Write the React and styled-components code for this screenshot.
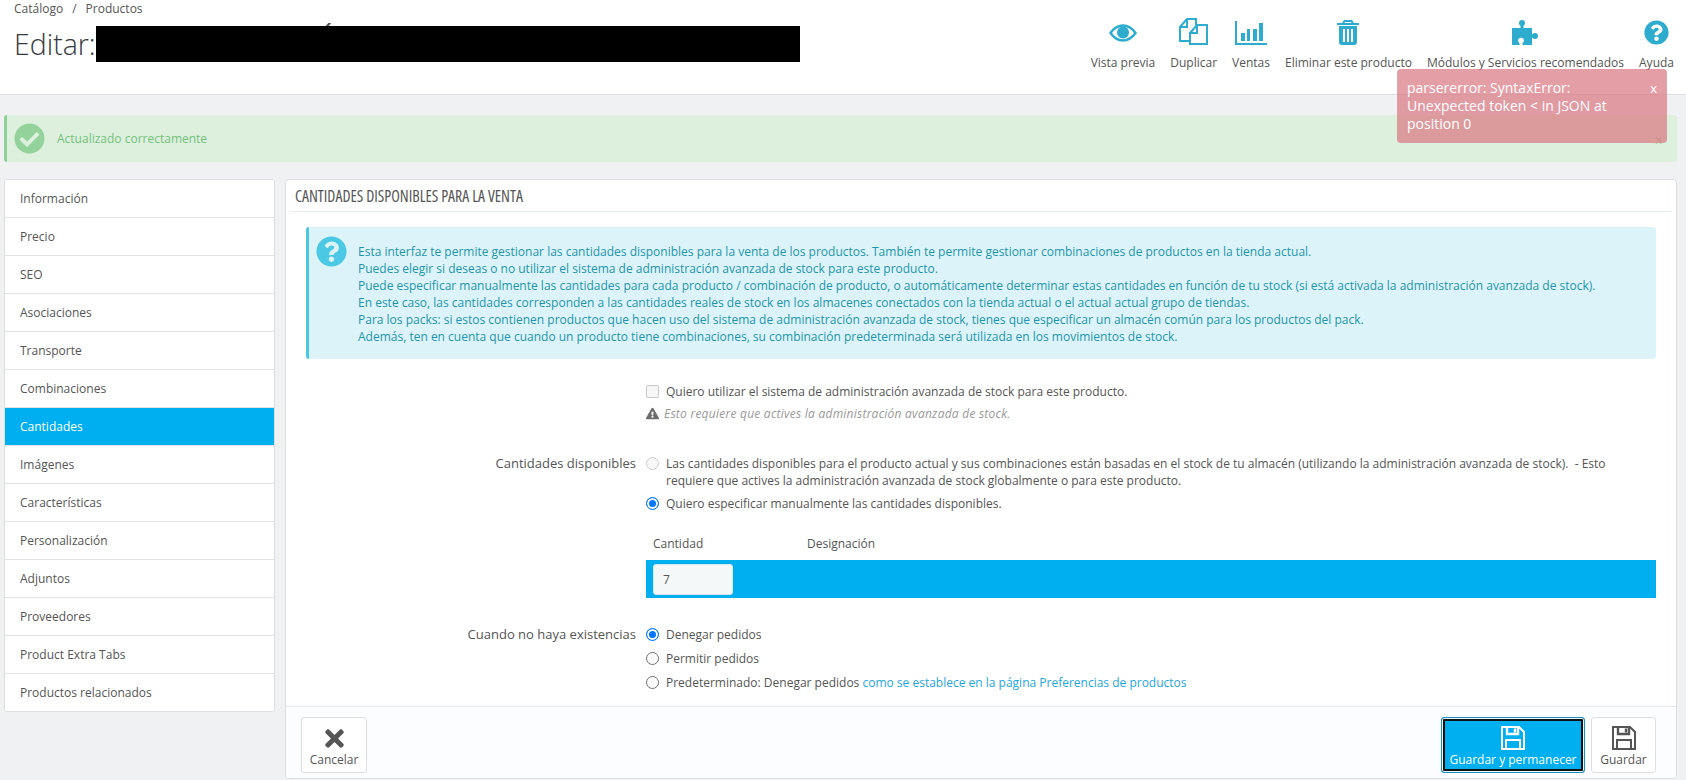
import React from 'react'
import styled, { createGlobalStyle } from 'styled-components'
import { FaQuestionCircle, FaCheckCircle, FaExclamationTriangle, FaTimes } from 'react-icons/fa'

const GlobalStyle = createGlobalStyle`
  html, body { margin: 0; padding: 0; background: #eff1f2; }
  body { font-family: "Open Sans", "Liberation Sans", sans-serif; font-size: 12px; color: #555; overflow: hidden; }
  * { box-sizing: border-box; }
`

const EyeIcon = () => (
  <svg width="28" height="21" viewBox="0 0 28 21">
    <path d="M1.5 9C5 4 9 1.5 14 1.5S23 4 26.5 9C23 14 19 16.5 14 16.5S5 14 1.5 9Z" fill="none" stroke="#2eacce" strokeWidth="2.4" />
    <circle cx="14" cy="8.5" r="6" fill="#2eacce" />
  </svg>
)

const FilesIcon = () => (
  <svg width="29" height="27" viewBox="0 0 29 27" fill="none" stroke="#2eacce" strokeWidth="2">
    <path d="M11 23H1V9L8 1h9v6" />
    <path d="M8 1v8H1" />
    <path d="M11 15l7-8h10v19H11z" />
    <path d="M18 7v8h-7" />
  </svg>
)

const ChartIcon = () => (
  <svg width="32" height="24" viewBox="0 0 32 24" fill="#2eacce">
    <rect x="0" y="0" width="2" height="24" />
    <rect x="0" y="22" width="32" height="2" />
    <rect x="6" y="12" width="4" height="8" />
    <rect x="12" y="8" width="3" height="12" />
    <rect x="18" y="8" width="4" height="12" />
    <rect x="24" y="2" width="4" height="18" />
  </svg>
)

const TrashIcon = () => (
  <svg width="22" height="25" viewBox="0 0 22 25" fill="#2eacce">
    <path fillRule="evenodd" d="M7 0h8l2 3h5v2H0V3h5zM8 2 7.4 3h7.2L14 2z" />
    <path fillRule="evenodd" d="M2 6h18v16a3 3 0 0 1-3 3H5a3 3 0 0 1-3-3zM6 9v13h2V9zM10 9v13h2V9zM14 9v13h2V9z" />
  </svg>
)

const PuzzleIcon = () => (
  <svg width="26" height="25" viewBox="0 0 26 25" fill="#2eacce">
    <circle cx="10" cy="3" r="3" />
    <rect x="8.5" y="4" width="3" height="5" />
    <rect x="0" y="8" width="20" height="17" />
    <rect x="19" y="14.5" width="4" height="3" />
    <circle cx="23" cy="16" r="3" />
    <circle cx="9" cy="20.5" r="2.8" fill="#fff" />
    <rect x="7.5" y="21" width="3" height="4" fill="#fff" />
  </svg>
)

const SaveIcon = () => (
  <svg width="24" height="24" viewBox="0 0 24 24" fill="none" stroke="currentColor" strokeWidth="2">
    <path d="M1 1h17l5 5v17H1z" />
    <path d="M6 1v7h11V1" strokeWidth="2.4" />
    <path d="M14 2.5v4" strokeWidth="2.4" />
    <path d="M5 23v-9h14v9" />
  </svg>
)

const tools = [
  { label: 'Vista previa', icon: <EyeIcon /> },
  { label: 'Duplicar', icon: <FilesIcon /> },
  { label: 'Ventas', icon: <ChartIcon /> },
  { label: 'Eliminar este producto', icon: <TrashIcon /> },
  { label: 'Módulos y Servicios recomendados', icon: <PuzzleIcon /> },
  { label: 'Ayuda', icon: <FaQuestionCircle size={25} /> },
]

const tabs = ['Información', 'Precio', 'SEO', 'Asociaciones', 'Transporte', 'Combinaciones', 'Cantidades', 'Imágenes', 'Características', 'Personalización', 'Adjuntos', 'Proveedores', 'Product Extra Tabs', 'Productos relacionados']

const infoLines = [
  'Esta interfaz te permite gestionar las cantidades disponibles para la venta de los productos. También te permite gestionar combinaciones de productos en la tienda actual.',
  'Puedes elegir si deseas o no utilizar el sistema de administración avanzada de stock para este producto.',
  'Puede especificar manualmente las cantidades para cada producto / combinación de producto, o automáticamente determinar estas cantidades en función de tu stock (si está activada la administración avanzada de stock).',
  'En este caso, las cantidades corresponden a las cantidades reales de stock en los almacenes conectados con la tienda actual o el actual actual grupo de tiendas.',
  'Para los packs: si estos contienen productos que hacen uso del sistema de administración avanzada de stock, tienes que especificar un almacén común para los productos del pack.',
  'Además, ten en cuenta que cuando un producto tiene combinaciones, su combinación predeterminada será utilizada en los movimientos de stock.',
]

export default function App() {
  return (
    <Page>
      <GlobalStyle />
      <Header>
        <HeaderLeft>
          <Breadcrumb>Catálogo<BreadcrumbSep>/</BreadcrumbSep>Productos</Breadcrumb>
          <TitleRow>
            <Title>Editar:</Title>
            <Redacted />
          </TitleRow>
        </HeaderLeft>
        <Toolbar>
          {tools.map((tool) => (
            <Tool key={tool.label}>
              <ToolIcon>{tool.icon}</ToolIcon>
              <span>{tool.label}</span>
            </Tool>
          ))}
        </Toolbar>
        <Toast>
          <ToastClose>x</ToastClose>
          parsererror: SyntaxError: Unexpected token &lt; in JSON at position 0
        </Toast>
      </Header>

      <Content>
        <SuccessAlert>
          <FaCheckCircle size={31} color="#93d29b" />
          <span>Actualizado correctamente</span>
          <AlertClose>x</AlertClose>
        </SuccessAlert>

        <Columns>
          <TabList>
            {tabs.map((tab) => (
              <TabItem key={tab} $active={tab === 'Cantidades'}>{tab}</TabItem>
            ))}
          </TabList>

          <Panel>
            <PanelHeading>Cantidades disponibles para la venta</PanelHeading>
            <PanelBody>
              <InfoBox>
                <InfoIcon><FaQuestionCircle size={31} color="#4bc8e4" /></InfoIcon>
                <div>
                  {infoLines.map((line) => <div key={line}>{line}</div>)}
                </div>
              </InfoBox>

              <FormRow $top={24}>
                <FieldLabel />
                <Field>
                  <OptionLine>
                    <CheckBox />
                    <span>Quiero utilizar el sistema de administración avanzada de stock para este producto.</span>
                  </OptionLine>
                  <Hint>
                    <FaExclamationTriangle size={13} color="#6d6d6d" />
                    <span>Esto requiere que actives la administración avanzada de stock.</span>
                  </Hint>
                </Field>
              </FormRow>

              <FormRow $top={33}>
                <FieldLabel>Cantidades disponibles</FieldLabel>
                <Field>
                  <OptionLine>
                    <Radio $disabled />
                    <span>Las cantidades disponibles para el producto actual y sus combinaciones están basadas en el stock de tu almacén (utilizando la administración avanzada de stock). &nbsp;- Esto requiere que actives la administración avanzada de stock globalmente o para este producto.</span>
                  </OptionLine>
                  <OptionLine $top={6}>
                    <Radio $checked />
                    <span>Quiero especificar manualmente las cantidades disponibles.</span>
                  </OptionLine>
                </Field>
              </FormRow>

              <QtyTable>
                <QtyHead>
                  <QtyHeadCell $width={154}>Cantidad</QtyHeadCell>
                  <QtyHeadCell>Designación</QtyHeadCell>
                </QtyHead>
                <QtyRow>
                  <QtyInput>7</QtyInput>
                </QtyRow>
              </QtyTable>

              <FormRow $top={28}>
                <FieldLabel>Cuando no haya existencias</FieldLabel>
                <Field>
                  <OptionLine>
                    <Radio $checked />
                    <span>Denegar pedidos</span>
                  </OptionLine>
                  <OptionLine $top={7}>
                    <Radio />
                    <span>Permitir pedidos</span>
                  </OptionLine>
                  <OptionLine $top={7}>
                    <Radio />
                    <span>Predeterminado: Denegar pedidos <PrefLink>como se establece en la página Preferencias de productos</PrefLink></span>
                  </OptionLine>
                </Field>
              </FormRow>
            </PanelBody>

            <PanelFooter>
              <FooterButton $width={66}>
                <FooterIcon><FaTimes size={27} /></FooterIcon>
                <span>Cancelar</span>
              </FooterButton>
              <FooterRight>
                <FooterButton $primary $width={144}>
                  <FooterIcon><SaveIcon /></FooterIcon>
                  <span>Guardar y permanecer</span>
                </FooterButton>
                <FooterButton $width={65}>
                  <FooterIcon><SaveIcon /></FooterIcon>
                  <span>Guardar</span>
                </FooterButton>
              </FooterRight>
            </PanelFooter>
          </Panel>
        </Columns>
      </Content>
    </Page>
  )
}

const Page = styled.div`
  width: 1686px;
  height: 780px;
  overflow: hidden;
`

const Header = styled.header`
  position: relative;
  height: 95px;
  background: #fff;
  border-bottom: 1px solid #dcdfe1;
  display: flex;
  justify-content: space-between;
  padding: 0 4.5px 0 14px;
`

const HeaderLeft = styled.div`
  display: flex;
  flex-direction: column;
`

const Breadcrumb = styled.div`
  font-size: 12px;
  line-height: 17px;
  color: #555;
`

const BreadcrumbSep = styled.span`
  margin: 0 9px;
`

const TitleRow = styled.div`
  display: flex;
  align-items: center;
  height: 36px;
  margin-top: 9px;
`

const Title = styled.h1`
  margin: 0;
  width: 82px;
  font-size: 28.5px;
  font-weight: 300;
  line-height: 36px;
  color: #363a41;
`

const Redacted = styled.div`
  position: relative;
  width: 704px;
  height: 36px;
  background: #000;
  &::after {
    content: "";
    position: absolute;
    left: 231px;
    top: -3px;
    width: 3px;
    height: 3px;
    background: #555;
    transform: skewX(-40deg);
  }
`

const Toolbar = styled.div`
  display: flex;
  align-items: flex-start;
  padding-top: 18px;
`

const Tool = styled.div`
  display: flex;
  flex-direction: column;
  align-items: center;
  padding: 0 7.5px;
  font-size: 12px;
  line-height: 17px;
  color: #555;
  white-space: nowrap;
`

const ToolIcon = styled.div`
  height: 27px;
  margin-bottom: 9px;
  display: flex;
  align-items: flex-end;
  color: #2eacce;
`

const Toast = styled.div`
  position: absolute;
  left: 1397px;
  top: 69px;
  width: 270px;
  height: 74px;
  z-index: 3;
  padding: 10px 50px 0 10px;
  font-size: 14px;
  line-height: 18px;
  color: #fff;
  background: rgba(217, 120, 130, 0.72);
  border-radius: 4px;
`

const ToastClose = styled.span`
  position: absolute;
  right: 10px;
  top: 10px;
  font-size: 13px;
`

const Content = styled.main`
  padding: 20px 9px 0 4px;
`

const SuccessAlert = styled.div`
  position: relative;
  height: 47px;
  display: flex;
  align-items: center;
  gap: 12px;
  padding-left: 7px;
  background: #ddf0de;
  border-left: 3px solid #8ed097;
  border-radius: 3px;
  color: #72c279;
  font-size: 12px;
`

const AlertClose = styled.span`
  position: absolute;
  right: 15px;
  top: 15px;
  font-size: 13px;
  opacity: 0.6;
`

const Columns = styled.div`
  display: grid;
  grid-template-columns: 271px 1fr;
  gap: 10px;
  align-items: start;
  margin-top: 17px;
`

const TabList = styled.nav`
  background: #fff;
  border: 1px solid #dcdfe1;
  border-radius: 3px;
  overflow: hidden;
`

const TabItem = styled.div`
  height: 38px;
  padding-left: 15px;
  display: flex;
  align-items: center;
  font-size: 12px;
  color: ${(p) => (p.$active ? '#fff' : '#555')};
  background: ${(p) => (p.$active ? '#00aff0' : '#fff')};
  border-bottom: 1px solid #e1e3e5;
  &:last-child { border-bottom: 0; height: 37px; }
`

const Panel = styled.section`
  height: 600px;
  background: #fff;
  border: 1px solid #dcdfe1;
  border-radius: 4px;
  display: flex;
  flex-direction: column;
  overflow: hidden;
`

const PanelHeading = styled.h3`
  margin: 0 4px;
  height: 32px;
  padding-left: 5px;
  display: flex;
  align-items: center;
  font-size: 15.8px;
  font-weight: 400;
  font-stretch: 80%;
  text-transform: uppercase;
  color: #555;
  border-bottom: 1px solid #eaedef;
`

const PanelBody = styled.div`
  flex: 1;
  padding: 15px 20px 0 20px;
`

const InfoBox = styled.div`
  height: 132px;
  display: flex;
  padding: 16px 0 0 7px;
  gap: 11px;
  background: #dcf4f9;
  border-left: 3px solid #4bc8e4;
  border-radius: 3px;
  color: #1e94ab;
  font-size: 12px;
  line-height: 17px;
`

const InfoIcon = styled.div`
  margin-top: -7px;
  height: 31px;
`

const FormRow = styled.div`
  display: grid;
  grid-template-columns: 330px 1fr;
  column-gap: 10px;
  margin-top: ${(p) => p.$top || 0}px;
`

const FieldLabel = styled.div`
  text-align: right;
  font-size: 13px;
  line-height: 17px;
  color: #555;
`

const Field = styled.div`
  display: flex;
  flex-direction: column;
`

const OptionLine = styled.div`
  display: flex;
  align-items: flex-start;
  gap: 7px;
  margin-top: ${(p) => p.$top || 0}px;
  line-height: 17px;
  font-size: 12px;
  color: #555;
`

const CheckBox = styled.span`
  flex: none;
  width: 13px;
  height: 13px;
  margin-top: 2px;
  background: #f6f6f6;
  border: 1px solid #c9c9c9;
  border-radius: 2px;
`

const Radio = styled.span`
  flex: none;
  width: 13px;
  height: 13px;
  margin-top: 2px;
  border-radius: 50%;
  background: #fff;
  border: 1px solid ${(p) => (p.$checked ? '#0075ff' : p.$disabled ? '#cfcfcf' : '#707070')};
  ${(p) => p.$checked && 'box-shadow: inset 0 0 0 2px #fff; background: #0075ff;'}
  ${(p) => p.$disabled && 'background: #f8f8f8;'}
`

const Hint = styled.div`
  display: flex;
  align-items: center;
  gap: 5px;
  margin-top: 5px;
  line-height: 17px;
  font-size: 12px;
  font-style: italic;
  letter-spacing: 0.24px;
  color: #999;
`

const QtyTable = styled.div`
  margin: 14px 0 0 340px;
`

const QtyHead = styled.div`
  display: flex;
  height: 34px;
  align-items: center;
  padding-left: 7px;
`

const QtyHeadCell = styled.div`
  width: ${(p) => (p.$width ? `${p.$width}px` : 'auto')};
  height: 17px;
  line-height: 17px;
  font-size: 12px;
  color: #555;
`

const QtyRow = styled.div`
  height: 38px;
  padding: 4px 7px;
  background: #00aff0;
`

const QtyInput = styled.div`
  width: 80px;
  height: 31px;
  padding-left: 9px;
  display: flex;
  align-items: center;
  background: #f5f8f9;
  border: 1px solid #dbe6e9;
  border-radius: 3px;
  font-size: 12px;
  color: #555;
`

const PrefLink = styled.span`
  color: #1fa6dd;
`

const PanelFooter = styled.div`
  height: 72px;
  flex: none;
  background: #fcfdfe;
  border-top: 1px solid #eaedef;
  display: flex;
  justify-content: space-between;
  padding: 10px 20px 0 15px;
`

const FooterRight = styled.div`
  display: flex;
  gap: 6px;
`

const FooterIcon = styled.div`
  height: 24px;
  display: flex;
  align-items: center;
  justify-content: center;
`

const FooterButton = styled.div`
  width: ${(p) => p.$width}px;
  height: 56px;
  display: flex;
  flex-direction: column;
  align-items: center;
  gap: 2px;
  padding-top: 8px;
  font-size: 12px;
  line-height: 16px;
  white-space: nowrap;
  border-radius: 3px;
  color: ${(p) => (p.$primary ? '#fff' : '#555')};
  background: ${(p) => (p.$primary ? '#00aff0' : '#fff')};
  border: 1px solid ${(p) => (p.$primary ? '#1b8ec0' : '#dcdfe1')};
  ${(p) => p.$primary && 'box-shadow: inset 0 0 0 1px #e8f8ff, inset 0 0 0 3px #111; font-weight: 500;'}
`
